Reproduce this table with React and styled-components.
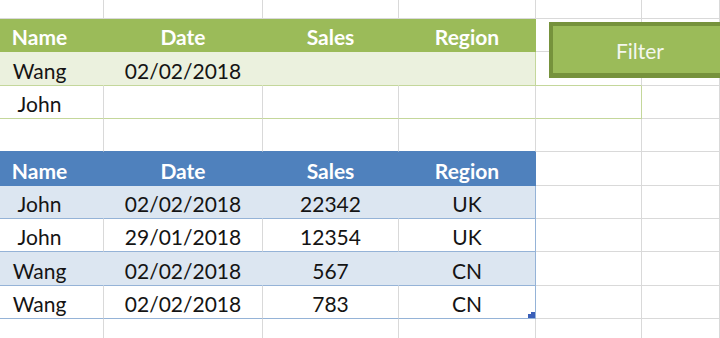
import React from "react";
import styled, { createGlobalStyle } from "styled-components";

const Global = createGlobalStyle`
  html, body { margin: 0; padding: 0; background: #ffffff; overflow: hidden; }
  #root { width: 720px; height: 338px; }
`;

const GRID = "#d9d9d9";
const G_HEAD = "#9bbb59";
const G_BAND = "#ebf1de";
const G_LINE = "#c4d79b";
const B_HEAD = "#4f81bd";
const B_BAND = "#dce6f1";
const B_LINE = "#95b3d7";

const Sheet = styled.div`
  position: relative;
  width: 720px;
  height: 338px;
  overflow: hidden;
  display: flex;
  flex-direction: column;
  font-family: Lato, "Open Sans", sans-serif;
`;

const Row = styled.div`
  display: grid;
  grid-template-columns: 104px 159px 136px 137px 106px 1fr;
  height: ${(p) => p.$h}px;
  flex: none;
`;

const Cell = styled.div`
  position: relative;
  box-sizing: border-box;
  display: flex;
  align-items: flex-end;
  justify-content: center;
  padding: 0 ${(p) => (p.$first ? 24 : 0)}px 4px 0;
  background: ${(p) => p.$bg || "#ffffff"};
  border-right: 1px solid ${(p) => p.$r || GRID};
  border-bottom: 1px solid ${(p) => p.$b || GRID};
  font-size: 21px;
  line-height: 21px;
  font-weight: ${(p) => (p.$head ? 700 : 400)};
  color: ${(p) => (p.$head ? "#ffffff" : "#141414")};
  white-space: nowrap;
`;

const Handle = styled.svg`
  position: absolute;
  right: 0;
  bottom: 0;
  width: 7px;
  height: 6px;
  display: block;
`;

const FilterButton = styled.div`
  position: absolute;
  left: 549px;
  top: 22px;
  width: 182px;
  height: 56px;
  box-sizing: border-box;
  background: #9bbb59;
  border: 4px solid #76923c;
  border-bottom-width: 5px;
  display: flex;
  align-items: center;
  justify-content: center;
  font-size: 21px;
  color: #f4f7ee;
  font-family: Lato, "Open Sans", sans-serif;
  padding-top: 1px;
`;

const H = 33.333;

const cols = [0, 1, 2, 3, 4, 5];

function BlankRow({ h, bottom }) {
  return (
    <Row $h={h}>
      {cols.map((c) => (
        <Cell key={c} $first={c === 0} $b={bottom && c < 4 ? bottom : GRID} />
      ))}
    </Row>
  );
}

function TableRow({ values, bg, head, bottomLine, rightLine, extra, lastColBorder }) {
  return (
    <Row $h={H}>
      {cols.map((c) => {
        if (c < 4) {
          return (
            <Cell
              key={c}
              $first={c === 0}
              $head={head}
              $bg={bg}
              $r={c === 3 ? rightLine : bg && bg !== "#ffffff" ? bg : GRID}
              $b={bottomLine}
            >
              {values[c] || ""}
              {c === 3 && extra}
            </Cell>
          );
        }
        if (c === 4) {
          return <Cell key={c} $r={lastColBorder?.r} $b={lastColBorder?.b} />;
        }
        return <Cell key={c} />;
      })}
    </Row>
  );
}

const handle = (
  <Handle viewBox="0 0 7 6">
    <path d="M3 0H7V6H0V2H3Z" fill="#3a5fb8" />
  </Handle>
);

export default function App() {
  return (
    <>
      <Global />
      <Sheet>
        <BlankRow h={19} />
        <TableRow
          head
          values={["Name", "Date", "Sales", "Region"]}
          bg={G_HEAD}
          rightLine={G_HEAD}
          bottomLine={G_HEAD}
        />
        <TableRow
          values={["Wang", "02/02/2018"]}
          bg={G_BAND}
          rightLine={G_LINE}
          bottomLine={G_LINE}
          lastColBorder={{ b: G_LINE }}
        />
        <TableRow
          values={["John"]}
          bg="#ffffff"
          rightLine={GRID}
          bottomLine={G_LINE}
          lastColBorder={{ r: G_LINE, b: G_LINE }}
        />
        <BlankRow h={H} bottom={B_HEAD} />
        <TableRow
          head
          values={["Name", "Date", "Sales", "Region"]}
          bg={B_HEAD}
          rightLine={B_HEAD}
          bottomLine={B_HEAD}
        />
        <TableRow
          values={["John", "02/02/2018", "22342", "UK"]}
          bg={B_BAND}
          rightLine={B_LINE}
          bottomLine={B_LINE}
        />
        <TableRow
          values={["John", "29/01/2018", "12354", "UK"]}
          bg="#ffffff"
          rightLine={B_LINE}
          bottomLine={B_LINE}
        />
        <TableRow
          values={["Wang", "02/02/2018", "567", "CN"]}
          bg={B_BAND}
          rightLine={B_LINE}
          bottomLine={B_LINE}
        />
        <TableRow
          values={["Wang", "02/02/2018", "783", "CN"]}
          bg="#ffffff"
          rightLine={B_LINE}
          bottomLine={B_LINE}
          extra={handle}
        />
        <BlankRow h={H} />
        <FilterButton>Filter</FilterButton>
      </Sheet>
    </>
  );
}
